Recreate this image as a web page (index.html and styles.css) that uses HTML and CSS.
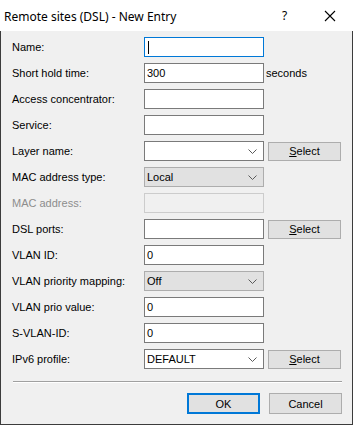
FILE: index.html
```html
<!DOCTYPE html>
<html>
<head>
<meta charset="utf-8">
<link rel="stylesheet" href="styles.css">
</head>
<body>
<div class="window">
  <div class="titlebar">
    <span class="title">Remote sites (DSL) - New Entry</span>
    <span class="help">?</span>
    <svg class="close" width="12" height="12" viewBox="0 0 12 12"><path d="M1 1L11 11M11 1L1 11" stroke="#000" stroke-width="1.1" fill="none"/></svg>
  </div>
  <div class="content">
    <div class="form">
      <label class="lbl">Name:</label>
      <div class="field focus"><span class="caret"></span></div>
      <div></div>

      <label class="lbl">Short hold time:</label>
      <div class="field">300</div>
      <div class="unit">seconds</div>

      <label class="lbl">Access concentrator:</label>
      <div class="field"></div>
      <div></div>

      <label class="lbl">Service:</label>
      <div class="field"></div>
      <div></div>

      <label class="lbl">Layer name:</label>
      <div class="field combo"><span></span><svg class="chev" width="9" height="5" viewBox="0 0 9 5"><path d="M0.5 0.5L4.5 4.5L8.5 0.5" stroke="#5a5a5a" fill="none"/></svg></div>
      <button class="btn sel"><u>S</u>elect</button>

      <label class="lbl">MAC address type:</label>
      <div class="field combo gray"><span>Local</span><svg class="chev" width="9" height="5" viewBox="0 0 9 5"><path d="M0.5 0.5L4.5 4.5L8.5 0.5" stroke="#5a5a5a" fill="none"/></svg></div>
      <div></div>

      <label class="lbl disabled">MAC address:</label>
      <div class="field off"></div>
      <div></div>

      <label class="lbl">DSL ports:</label>
      <div class="field"></div>
      <button class="btn sel"><u>S</u>elect</button>

      <label class="lbl">VLAN ID:</label>
      <div class="field">0</div>
      <div></div>

      <label class="lbl">VLAN priority mapping:</label>
      <div class="field combo gray"><span>Off</span><svg class="chev" width="9" height="5" viewBox="0 0 9 5"><path d="M0.5 0.5L4.5 4.5L8.5 0.5" stroke="#5a5a5a" fill="none"/></svg></div>
      <div></div>

      <label class="lbl">VLAN prio value:</label>
      <div class="field">0</div>
      <div></div>

      <label class="lbl">S-VLAN-ID:</label>
      <div class="field">0</div>
      <div></div>

      <label class="lbl">IPv6 profile:</label>
      <div class="field combo"><span>DEFAULT</span><svg class="chev" width="9" height="5" viewBox="0 0 9 5"><path d="M0.5 0.5L4.5 4.5L8.5 0.5" stroke="#5a5a5a" fill="none"/></svg></div>
      <button class="btn sel"><u>S</u>elect</button>
    </div>
    <div class="sep"></div>
    <div class="actions">
      <button class="btn ok">OK</button>
      <button class="btn">Cancel</button>
    </div>
  </div>
</div>
</body>
</html>
```
FILE: styles.css
```css
* { box-sizing: border-box; }
html, body { margin: 0; padding: 0; background: #f0f0f0; }
body { font-family: "Liberation Sans", Arial, sans-serif; font-size: 11px; color: #000; }
.window {
  width: 353px; height: 425px;
  background: #f0f0f0;
  border: 1px solid #3c3c3c;
  border-top: none;
  display: flex; flex-direction: column;
}
.titlebar {
  height: 31px; background: #fff;
  display: flex; align-items: center;
  padding-left: 4px;
  margin: 0 -1px;
  position: relative;
}
.title { font-family: "Noto Sans", "Open Sans", sans-serif; font-size: 12px; flex: 1; padding-top: 1px; }
.help { font-family: "Noto Sans", sans-serif; font-size: 12px; width: 12px; margin-right: 30px; }
.close { margin-right: 17px; }
.content { padding: 6px 0 0 11px; flex: 1; display: flex; flex-direction: column; }
.form {
  display: grid;
  grid-template-columns: 132px 120px auto;
  grid-auto-rows: 20px;
  row-gap: 6px;
}
.lbl { display: flex; align-items: center; }
.lbl.disabled { color: #8d8d8d; }
.field {
  height: 20px; background: #fff;
  border: 1px solid #7a7a7a;
  display: flex; align-items: center;
  padding-left: 2px;
}
.field.focus { border-color: #0078d7; }
.caret { width: 1px; height: 13px; background: #000; margin-left: 1px; }
.field.off { background: #f0f0f0; border-color: #cccccc; }
.combo { justify-content: space-between; padding-right: 6px; }
.combo.gray { background: #e1e1e1; border-color: #adadad; }
.chev { display: block; }
.unit { display: flex; align-items: center; padding-left: 2px; }
.btn {
  font-family: "Liberation Sans", Arial, sans-serif; font-size: 11px; color: #000;
  background: #e1e1e1; border: 1px solid #adadad;
  padding: 0; margin: 0;
  width: 73px; height: 21px;
}
.btn u { text-decoration: underline; }
.sel { margin-left: 4px; height: 19px; align-self: center; }
.sep { height: 2px; border-top: 1px solid #a0a0a0; border-bottom: 1px solid #fff; margin: 12px 10px 0 1px; }
.actions { display: flex; justify-content: flex-end; gap: 9px; padding: 10px 10px 0 0; }
.actions .btn { width: 73px; height: 21px; }
.ok { border: 2px solid #0078d7; }
```
